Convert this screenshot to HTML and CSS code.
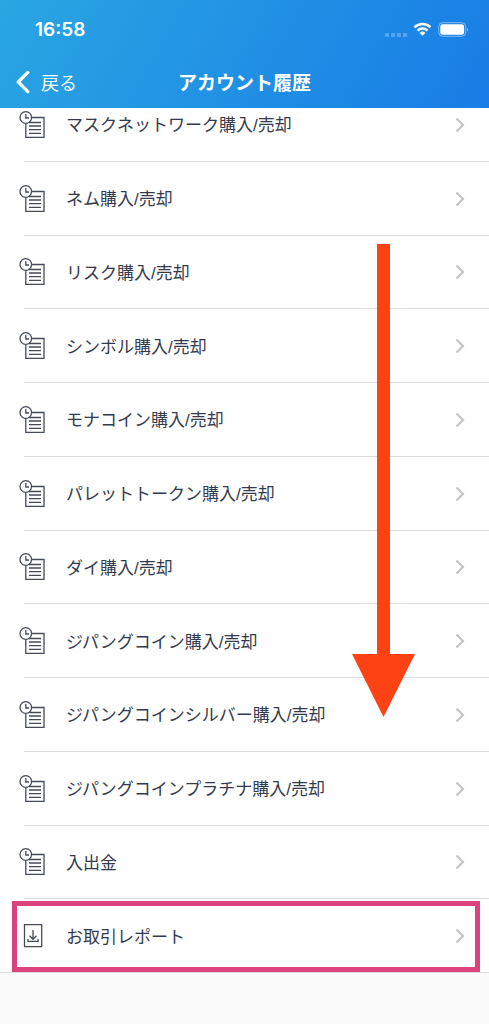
FILE: index.html
```html
<!DOCTYPE html>
<html lang="ja">
<head>
<meta charset="utf-8">
<meta name="viewport" content="width=device-width, initial-scale=1">
<title>アカウント履歴</title>
<link rel="stylesheet" href="styles.css">
</head>
<body>
<svg class="defs" aria-hidden="true">
  <symbol id="history" viewBox="0 0 26 28">
    <path d="M13 6.5h12v19.8H6.800V13" />
    <circle cx="6.8" cy="6.5" r="5.8" />
    <path d="M6.800 3v4H10M10 11.500h12M10 15h12M10 18.700h12M10 22.300h12" />
  </symbol>
  <symbol id="report" viewBox="0 0 26 28">
    <path d="M5.500 2.700h17.200v22H5.500zM14 8v9M10.500 13.700l3.500 3.600 3.500-3.600M9 17v2.300h10V17" />
  </symbol>
  <symbol id="chevron" viewBox="0 0 10 16">
    <path d="M1.500 1.500L8 8l-6.500 6.500" />
  </symbol>
</svg>
<header class="header">
  <div class="status">
    <time class="clock">16:58</time>
    <div class="indicators">
      <svg class="signal" viewBox="0 0 22 4" aria-hidden="true"><path d="M0 0h4v4H0zM6 0h4v4H6zM12 0h4v4h-4zM18 0h4v4h-4z"/></svg>
      <svg class="wifi" viewBox="0 0 20 15" aria-hidden="true"><path class="arc" d="M1.500 5.200a12.200 12.200 0 0 1 17 0M4.800 8.600a7.500 7.500 0 0 1 10.400 0"/><path class="dot" d="M10 14.200l-3-3.100a4.300 4.300 0 0 1 6 0z"/></svg>
      <svg class="battery" viewBox="0 0 31 15" aria-hidden="true"><rect class="shell" x=".7" y=".7" width="27" height="13.6" rx="4"/><rect x="2.3" y="2.3" width="23.8" height="10.4" rx="2.5"/><path class="cap" d="M29 5.200q2 2.300 0 4.600z"/></svg>
    </div>
  </div>
  <nav class="nav">
    <button class="back" type="button"><svg class="back-icon" viewBox="0 0 14 22" aria-hidden="true"><path d="M12 2L3 11l9 9"/></svg>戻る</button>
    <h1 class="title">アカウント履歴</h1>
  </nav>
</header>
<main class="content">
  <ul class="list">
    <li class="item"><a class="link" href="#"><svg class="icon" aria-hidden="true"><use href="#history"/></svg><span class="label">マスクネットワーク購入/売却</span><svg class="chevron" aria-hidden="true"><use href="#chevron"/></svg></a></li>
    <li class="item"><a class="link" href="#"><svg class="icon" aria-hidden="true"><use href="#history"/></svg><span class="label">ネム購入/売却</span><svg class="chevron" aria-hidden="true"><use href="#chevron"/></svg></a></li>
    <li class="item"><a class="link" href="#"><svg class="icon" aria-hidden="true"><use href="#history"/></svg><span class="label">リスク購入/売却</span><svg class="chevron" aria-hidden="true"><use href="#chevron"/></svg></a></li>
    <li class="item"><a class="link" href="#"><svg class="icon" aria-hidden="true"><use href="#history"/></svg><span class="label">シンボル購入/売却</span><svg class="chevron" aria-hidden="true"><use href="#chevron"/></svg></a></li>
    <li class="item"><a class="link" href="#"><svg class="icon" aria-hidden="true"><use href="#history"/></svg><span class="label">モナコイン購入/売却</span><svg class="chevron" aria-hidden="true"><use href="#chevron"/></svg></a></li>
    <li class="item"><a class="link" href="#"><svg class="icon" aria-hidden="true"><use href="#history"/></svg><span class="label">パレットトークン購入/売却</span><svg class="chevron" aria-hidden="true"><use href="#chevron"/></svg></a></li>
    <li class="item"><a class="link" href="#"><svg class="icon" aria-hidden="true"><use href="#history"/></svg><span class="label">ダイ購入/売却</span><svg class="chevron" aria-hidden="true"><use href="#chevron"/></svg></a></li>
    <li class="item"><a class="link" href="#"><svg class="icon" aria-hidden="true"><use href="#history"/></svg><span class="label">ジパングコイン購入/売却</span><svg class="chevron" aria-hidden="true"><use href="#chevron"/></svg></a></li>
    <li class="item"><a class="link" href="#"><svg class="icon" aria-hidden="true"><use href="#history"/></svg><span class="label">ジパングコインシルバー購入/売却</span><svg class="chevron" aria-hidden="true"><use href="#chevron"/></svg></a></li>
    <li class="item"><a class="link" href="#"><svg class="icon" aria-hidden="true"><use href="#history"/></svg><span class="label">ジパングコインプラチナ購入/売却</span><svg class="chevron" aria-hidden="true"><use href="#chevron"/></svg></a></li>
    <li class="item"><a class="link" href="#"><svg class="icon" aria-hidden="true"><use href="#history"/></svg><span class="label">入出金</span><svg class="chevron" aria-hidden="true"><use href="#chevron"/></svg></a></li>
    <li class="item marked"><a class="link" href="#"><svg class="icon" aria-hidden="true"><use href="#report"/></svg><span class="label">お取引レポート</span><svg class="chevron" aria-hidden="true"><use href="#chevron"/></svg></a></li>
  </ul>
  <svg class="arrow" viewBox="0 0 63 473" aria-hidden="true"><path d="M25 0h13v410h25L31.500 473 0 410h25z"/></svg>
</main>
</body>
</html>
```

FILE: styles.css
```css
* {
  box-sizing: border-box;
}

body {
  display: flex;
  flex-direction: column;
  min-height: 100vh;
  margin: 0;
  background: #fafafa;
  color: #333a4d;
  font-family: "Liberation Sans", "Noto Sans CJK JP", sans-serif;
}

.defs {
  display: none;
}

.header {
  position: relative;
  z-index: 1;
  display: flex;
  flex-direction: column;
  height: 108px;
  background: linear-gradient(120deg, #2aa6e2, #187ce6);
  color: #fff;
}

.status {
  display: flex;
  align-items: center;
  justify-content: space-between;
  height: 58px;
  padding: 0 20px 0 35px;
}

.clock {
  padding-top: 2px;
  font: 600 19px/24px Inter, sans-serif;
}

.indicators {
  display: flex;
  align-items: center;
  gap: 6px;
}

.indicators svg {
  fill: #fff;
}

.signal {
  align-self: flex-end;
  width: 22px;
  height: 4px;
  opacity: 0.25;
}

.wifi {
  width: 19px;
  height: 15px;
}

.wifi .arc {
  fill: none;
  stroke: #fff;
  stroke-width: 2.6;
}

.battery {
  width: 31px;
  height: 15px;
}

.battery .shell {
  fill: none;
  stroke: #fff;
  stroke-opacity: 0.45;
}

.battery .cap {
  fill-opacity: 0.5;
}

.nav {
  display: grid;
  grid-template-columns: 1fr auto 1fr;
  align-items: center;
  height: 48px;
  padding: 0 15px;
}

.back {
  display: flex;
  align-items: center;
  justify-self: start;
  gap: 11px;
  padding: 0;
  border: 0;
  background: none;
  color: inherit;
  font: 400 18px/24px "Noto Sans CJK JP", sans-serif;
}

.back-icon {
  width: 15px;
  height: 24px;
  fill: none;
  stroke: #fff;
  stroke-width: 3;
  stroke-linecap: round;
  stroke-linejoin: round;
}

.title {
  margin: 0;
  font: 700 19px/24px "Noto Sans CJK JP", sans-serif;
}

.content {
  position: relative;
  display: flex;
  flex: 1;
  flex-direction: column;
  margin-top: -20px;
  padding-bottom: 51px;
}

.list {
  display: grid;
  flex: 1;
  grid-auto-rows: 1fr;
  margin: 0;
  padding: 0;
  background: #fff;
  list-style: none;
}

.item {
  position: relative;
  display: flex;
  min-height: 64px;
  padding-left: 24px;
}

.link {
  display: flex;
  flex: 1;
  align-items: center;
  margin-left: -5px;
  padding: 0 24px 0 0;
  color: inherit;
  text-decoration: none;
}

.item::before {
  content: "";
  position: absolute;
  right: 0;
  bottom: 0;
  left: 24px;
  height: 1px;
  background: #dcdcdc;
}

.marked::before {
  left: 0;
}

.marked::after {
  content: "";
  position: absolute;
  inset: 2px 9px 1px 12px;
  border: 5px solid #dc427c;
  pointer-events: none;
}

.icon {
  flex: none;
  width: 26px;
  height: 28px;
  margin-right: 21px;
  fill: none;
  stroke: #454b5b;
  stroke-width: 1.3;
}

.label {
  flex: 1;
  padding-top: 3px;
  font-size: 17px;
  line-height: 24px;
}

.chevron {
  width: 10px;
  height: 16px;
  fill: none;
  stroke: #c4c4c6;
  stroke-width: 2.2;
}

.arrow {
  position: absolute;
  top: 156px;
  right: 74px;
  width: 63px;
  height: 473px;
  fill: #ff4214;
  pointer-events: none;
}
```
